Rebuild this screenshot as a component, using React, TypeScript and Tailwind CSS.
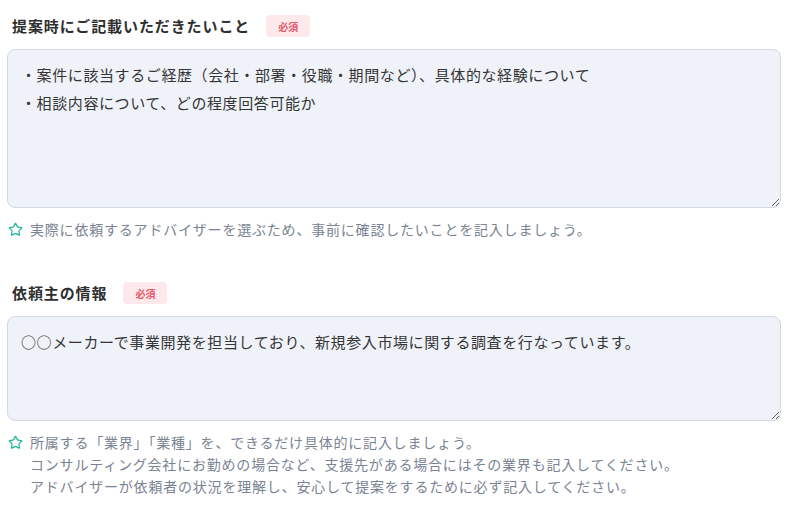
import { Star } from "lucide-react";

const font = { fontFamily: '"Noto Sans CJK JP", "Noto Sans", sans-serif' };

const Badge = () => (
  <span className="inline-flex h-[22px] w-[44px] items-center justify-center rounded-[4px] bg-[#fde8eb] text-[10px] font-bold text-[#e6586c]">
    必須
  </span>
);

const Hint = ({ lines }: { lines: string[] }) => (
  <div className="flex items-start gap-[7px] pl-px text-[14px] leading-[22px] tracking-[0.8px] text-[#7a8393]">
    <Star className="mt-[4px] h-[15px] w-[15px] shrink-0 text-[#22b79c]" strokeWidth={2} />
    <div>
      {lines.map((line, i) => (
        <p key={i}>{line}</p>
      ))}
    </div>
  </div>
);

export default function App() {
  const sections = [
    {
      title: "提案時にご記載いただきたいこと",
      value:
        "・案件に該当するご経歴（会社・部署・役職・期間など）、具体的な経験について\n・相談内容について、どの程度回答可能か",
      height: "h-[159px]",
      hint: ["実際に依頼するアドバイザーを選ぶため、事前に確認したいことを記入しましょう。"],
    },
    {
      title: "依頼主の情報",
      value: "○○メーカーで事業開発を担当しており、新規参入市場に関する調査を行なっています。",
      height: "h-[105px]",
      hint: [
        "所属する「業界」「業種」を、できるだけ具体的に記入しましょう。",
        "コンサルティング会社にお勤めの場合など、支援先がある場合にはその業界も記入してください。",
        "アドバイザーが依頼者の状況を理解し、安心して提案をするために必ず記入してください。",
      ],
    },
  ];

  return (
    <div className="min-h-screen bg-white px-[7px] pt-[15px] text-[#333]" style={font}>
      <div className="flex flex-col gap-[42px]">
        {sections.map((s, i) => (
          <div key={i}>
            <div className="flex h-[22px] items-center gap-[16px] pl-[5px]">
              <h2 className="text-[15px] font-bold tracking-[0.9px] text-[#2f2f2f]">{s.title}</h2>
              <Badge />
            </div>
            <textarea
              readOnly
              defaultValue={s.value}
              className={`mt-[12px] block w-[774px] ${s.height} resize-y rounded-[8px] border border-[#d3d9e3] bg-[#eff2f8] px-[13px] pt-[11px] text-[15px] leading-[28px] tracking-[0.6px] text-[#353535] outline-none`}
            />
            <div className="mt-[10px]">
              <Hint lines={s.hint} />
            </div>
          </div>
        ))}
      </div>
    </div>
  );
}
